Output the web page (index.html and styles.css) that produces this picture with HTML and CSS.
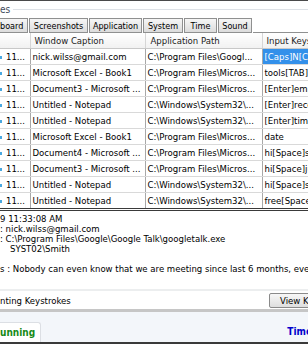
FILE: index.html
```html
<!DOCTYPE html>
<html>
<head>
<meta charset="utf-8">
<link rel="stylesheet" href="styles.css">
</head>
<body>
<div class="app">
  <div class="group-head"><span class="group-label">es</span><span class="group-line"></span></div>
  <div class="tabs">
    <div class="tab first">board</div>
    <div class="tab w-shots">Screenshots</div>
    <div class="tab w-app">Application</div>
    <div class="tab w-sys">System</div>
    <div class="tab w-time">Time</div>
    <div class="tab w-sound">Sound</div>
    <div class="tab-fill"></div>
  </div>
  <table class="grid">
    <colgroup><col class="c1"><col class="c2"><col class="c3"><col class="c4"></colgroup>
    <thead>
      <tr><th></th><th class="h2">Window Caption</th><th class="h3">Application Path</th><th class="h4">Input Keys</th></tr>
    </thead>
    <tbody>
      <tr><td class="t"><span class="dot"></span>11...</td><td>nick.wilss@gmail.com</td><td>C:\Program Files\Googl...</td><td class="sel">[Caps]N[Caps]</td></tr>
      <tr><td class="t"><span class="dot"></span>11...</td><td>Microsoft Excel - Book1</td><td>C:\Program Files\Micros...</td><td>tools[TAB]</td></tr>
      <tr><td class="t"><span class="dot"></span>11...</td><td>Document3 - Microsoft ...</td><td>C:\Program Files\Micros...</td><td>[Enter]employee</td></tr>
      <tr><td class="t"><span class="dot"></span>11...</td><td>Untitled - Notepad</td><td>C:\Windows\System32\...</td><td>[Enter]record</td></tr>
      <tr><td class="t"><span class="dot"></span>11...</td><td>Untitled - Notepad</td><td>C:\Windows\System32\...</td><td>[Enter]time</td></tr>
      <tr><td class="t"><span class="dot"></span>11...</td><td>Microsoft Excel - Book1</td><td>C:\Program Files\Micros...</td><td>date</td></tr>
      <tr><td class="t"><span class="dot"></span>11...</td><td>Document4 - Microsoft ...</td><td>C:\Program Files\Micros...</td><td>hi[Space]see</td></tr>
      <tr><td class="t"><span class="dot"></span>11...</td><td>Document3 - Microsoft ...</td><td>C:\Program Files\Micros...</td><td>hi[Space]just</td></tr>
      <tr><td class="t"><span class="dot"></span>11...</td><td>Untitled - Notepad</td><td>C:\Windows\System32\...</td><td>hi[Space]see</td></tr>
      <tr><td class="t"><span class="dot"></span>11...</td><td>Untitled - Notepad</td><td>C:\Windows\System32\...</td><td>free[Space]</td></tr>
    </tbody>
  </table>
  <div class="details">
    <div class="line">9 11:33:08 AM</div>
    <div class="line">: nick.wilss@gmail.com</div>
    <div class="line">: C:\Program Files\Google\Google Talk\googletalk.exe</div>
    <div class="line indent">SYST02\Smith</div>
    <div class="line">&nbsp;</div>
    <div class="line">s : Nobody can even know that we are meeting since last 6 months, even you</div>
  </div>
  <div class="actions">
    <span class="act-label">nting Keystrokes</span>
    <button class="btn">View Keystrokes</button>
  </div>
  <div class="status">
    <div class="status-tab">unning</div>
    <div class="status-time">Time</div>
  </div>
</div>
</body>
</html>
```
FILE: styles.css
```css
html, body {
  margin: 0;
  padding: 0;
}
body {
  width: 308px;
  height: 344px;
  overflow: hidden;
  background: #ffffff;
  font-family: "DejaVu Sans Condensed", "DejaVu Sans", sans-serif;
  font-stretch: condensed;
  font-size: 9.5px;
  color: #000;
}
.app {
  width: 308px;
  height: 344px;
  display: flex;
  flex-direction: column;
  border-top: 1px solid #4a4a4a;
  box-sizing: border-box;
  overflow: hidden;
}
.group-head {
  height: 16px;
  padding-top: 1px;
  box-sizing: border-box;
  display: flex;
  align-items: center;
  gap: 3px;
  flex: none;
}
.group-label {
  color: #3e4a5c;
  font-size: 10px;
  white-space: nowrap;
}
.group-line {
  flex: 1;
  height: 1px;
  background: #dde1e6;
}
.tabs {
  display: flex;
  align-items: flex-end;
  gap: 1px;
  height: 16px;
  flex: none;
}
.tab {
  height: 13px;
  line-height: 14px;
  padding: 0;
  font-size: 9px;
  text-align: center;
  border: 1px solid #8f9090;
  background: linear-gradient(#f6f6f6, #dcdcdc);
  white-space: nowrap;
  overflow: hidden;
  box-sizing: content-box;
  flex: none;
}
.tab.first {
  border-left: none;
  text-align: left;
  width: 27px;
}
.tab.w-shots { width: 57px; }
.tab.w-app { width: 51px; }
.tab.w-sys { width: 38px; }
.tab.w-time { width: 31px; }
.tab.w-sound { width: 32px; }
.tab-fill {
  flex: 1;
  height: 0;
  border-bottom: 1px solid #8f9090;
}
.grid {
  border-collapse: collapse;
  table-layout: fixed;
  width: 308px;
  flex: none;
  border-bottom: 3px double #3a3a3a;
}
.c1 { width: 30px; }
.c2 { width: 115px; }
.c3 { width: 117px; }
.c4 { width: 46px; }
.grid th {
  height: 15px;
  padding: 0;
  font-weight: normal;
  text-align: left;
  background: linear-gradient(#ffffff, #f1f1f1);
  border-right: 1px solid #d6d6d6;
  border-bottom: 1px solid #c8c8c8;
  white-space: nowrap;
  overflow: hidden;
  color: #222;
}
.grid th.h2 { padding-left: 4px; }
.grid th.h3 { padding-left: 5px; }
.grid th.h4 { padding-left: 4px; border-right: none; }
.grid td {
  height: 15px;
  padding: 0 0 0 2px;
  border-right: 1px solid #a8a8a8;
  border-bottom: 1px solid #d9d9d9;
  white-space: nowrap;
  overflow: hidden;
}
.grid td:last-child { border-right: none; }
.grid td.t {
  padding-left: 0;
}
.dot {
  display: inline-block;
  width: 2px;
  height: 3px;
  background: #4aa8e0;
  margin-right: 4px;
  vertical-align: middle;
}
.grid td.sel {
  background: #3390ea;
  color: #ffffff;
}
.details {
  padding-top: 3px;
  height: 78px;
  flex: none;
  box-sizing: border-box;
}
.line {
  height: 10px;
  line-height: 10px;
  white-space: nowrap;
}
.line.indent { padding-left: 10px; }
.actions {
  height: 23px;
  flex: none;
  box-sizing: border-box;
  border-top: 2px solid #eceeef;
  border-bottom: 3px solid #c6c6c6;
  display: flex;
  align-items: center;
  justify-content: space-between;
}
.act-label {
  white-space: nowrap;
}
.btn {
  font-family: inherit;
  font-stretch: condensed;
  font-size: 9.5px;
  height: 15px;
  padding: 0 0 0 10px;
  width: 60px;
  margin-right: -21px;
  text-align: left;
  border: 1px solid #8a8a8a;
  border-radius: 2px;
  background: linear-gradient(#f7f7f7, #dedede);
  white-space: nowrap;
  overflow: hidden;
}
.status {
  flex: 1;
  background: #f3f6fa;
  display: flex;
  align-items: flex-end;
  justify-content: space-between;
  border-bottom: 2px solid #3a3a3a;
}
.status-tab {
  width: 41px;
  height: 20px;
  line-height: 20px;
  background: #ffffff;
  border: 1px solid #dcdfe4;
  border-left: none;
  border-bottom: none;
  border-radius: 0 3px 0 0;
  color: #168a16;
  font-weight: bold;
  font-size: 10px;
  box-sizing: border-box;
}
.status-time {
  color: #0000cc;
  font-weight: bold;
  font-size: 10px;
  line-height: 20px;
  margin-right: -4px;
}
```
